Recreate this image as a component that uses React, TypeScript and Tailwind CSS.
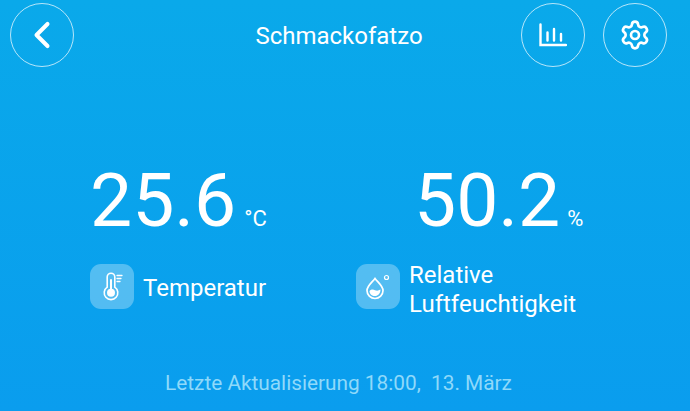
import { ChevronLeft, Settings } from "lucide-react";

function RoundButton({ children }: { children: React.ReactNode }) {
  return (
    <div className="w-[64px] h-[64px] rounded-full border-[1.5px] border-white/70 flex items-center justify-center shrink-0">
      {children}
    </div>
  );
}

function ChartIcon() {
  return (
    <svg width="28" height="24" viewBox="0 0 28 24" fill="none" stroke="white" strokeWidth="2.4" strokeLinecap="round">
      <path d="M1.500 1.500V22H27" />
      <path d="M8.500 9.500V17.500M15 6V17.500M22 11V17.500" />
    </svg>
  );
}

function ThermometerIcon() {
  return (
    <svg width="28" height="36" viewBox="0 0 28 36" fill="none" stroke="white" strokeWidth="1.6" strokeLinecap="round">
      <path d="M9.200 18.200V8a3.800 3.800 0 0 1 7.600 0V18.200a6.800 6.800 0 1 1-7.600 0z" />
      <circle cx="13" cy="23.800" r="4" fill="white" stroke="none" />
      <path d="M13 11V22" strokeWidth="2" />
      <path d="M19 6.500h5M19 9.500h4M19 12.500h3" strokeWidth="1.300" />
    </svg>
  );
}

function DropIcon() {
  return (
    <svg width="32" height="36" viewBox="0 0 32 36" fill="none" stroke="white" strokeWidth="1.700">
      <path d="M13 9.500C10 13.500 5 17 5 21.500a8 8 0 0 0 16 0C21 17 16 13.500 13 9.500z" />
      <path d="M7.500 22c2-2 4-1.500 5.500-.8 2 .8 3.500.5 5.500-.7 0 4-2.500 6.500-5.500 6.500s-5.500-2-5.500-5z" fill="white" stroke="none" />
      <circle cx="24.500" cy="8.500" r="2" strokeWidth="1.200" />
    </svg>
  );
}

export default function App() {
  return (
    <div className="w-[690px] h-[411px] overflow-hidden flex flex-col text-white bg-gradient-to-b from-[#0aa9ea] to-[#0a9dee] font-['Roboto',sans-serif]">
      <header className="flex items-center pl-[10px] pr-[23px] pt-[3px]">
        <RoundButton>
          <ChevronLeft size={44} strokeWidth={2.2} />
        </RoundButton>
        <div className="flex-1 text-center text-[24px] pl-[83px] pt-[2px]">Schmackofatzo</div>
        <div className="flex gap-[18px]">
          <RoundButton>
            <ChartIcon />
          </RoundButton>
          <RoundButton>
            <Settings size={32} strokeWidth={2} />
          </RoundButton>
        </div>
      </header>

      <main className="flex pt-[92px] pl-[90px]">
        <div className="w-[266px]">
          <div className="flex items-baseline">
            <span className="text-[75px] leading-[82px]">25.6</span>
            <span className="text-[22px] ml-[8px]">°C</span>
          </div>
          <div className="flex items-center gap-[9px] mt-[15px] h-[64px]">
            <div className="w-[44px] h-[45px] rounded-[11px] bg-white/30 flex items-center justify-center mb-[3px]">
              <ThermometerIcon />
            </div>
            <span className="text-[24px]">Temperatur</span>
          </div>
        </div>
        <div>
          <div className="flex items-baseline pl-[58px]">
            <span className="text-[75px] leading-[82px]">50.2</span>
            <span className="text-[22px] ml-[7px]">%</span>
          </div>
          <div className="flex items-center gap-[9px] mt-[15px] h-[64px]">
            <div className="w-[44px] h-[45px] rounded-[11px] bg-white/30 flex items-center justify-center mb-[3px]">
              <DropIcon />
            </div>
            <span className="text-[24px] leading-[29px] pt-[3px]">
              Relative
              <br />
              Luftfeuchtigkeit
            </span>
          </div>
        </div>
      </main>

      <footer className="text-center text-[20.800px] text-[#8fd9fa] mt-[48px] pr-[13px]">
        Letzte Aktualisierung 18:00,&nbsp; 13. März
      </footer>
    </div>
  );
}
